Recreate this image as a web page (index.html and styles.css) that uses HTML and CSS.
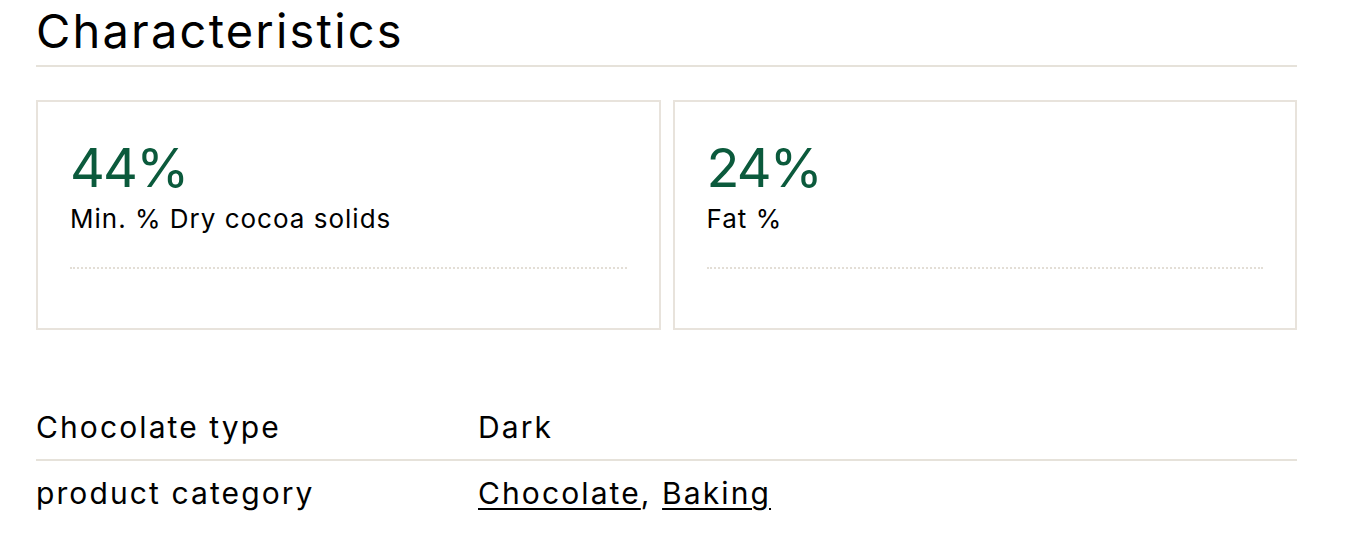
FILE: index.html
```html
<!DOCTYPE html>
<html lang="en">
<head>
<meta charset="utf-8">
<title>Characteristics</title>
<link rel="stylesheet" href="styles.css">
</head>
<body>
<section class="chars">
  <h2 class="chars-title">Characteristics</h2>
  <div class="cards">
    <div class="card">
      <div class="card-value">44%</div>
      <div class="card-label">Min. % Dry cocoa solids</div>
      <div class="card-rule"></div>
    </div>
    <div class="card">
      <div class="card-value">24%</div>
      <div class="card-label">Fat %</div>
      <div class="card-rule"></div>
    </div>
  </div>
  <div class="specs">
    <div class="spec-row">
      <div class="spec-key">Chocolate type</div>
      <div class="spec-val">Dark</div>
    </div>
    <div class="spec-row">
      <div class="spec-key">product category</div>
      <div class="spec-val"><a href="#">Chocolate</a>, <a href="#">Baking</a></div>
    </div>
  </div>
</section>
</body>
</html>
```
FILE: styles.css
```css
html, body {
  margin: 0;
  padding: 0;
  background: #ffffff;
}
body {
  font-family: "Inter", "DejaVu Sans", sans-serif;
  color: #000;
}
.chars {
  width: 1261px;
  margin-left: 36px;
}
.chars-title {
  margin: 0;
  font-weight: 400;
  font-size: 47px;
  line-height: 61px;
  letter-spacing: 2.2px;
  padding-bottom: 4px;
  border-bottom: 2px solid #e6e2da;
}
.cards {
  display: grid;
  grid-template-columns: 1fr 1fr;
  gap: 12px;
  margin-top: 33px;
}
.card {
  border: 2px solid #e8e3dc;
  height: 230px;
  box-sizing: border-box;
  padding: 32px 32px 0 32px;
}
.card-value {
  color: #0b5a3c;
  font-size: 54px;
  line-height: 67px;
  letter-spacing: -1.8px;
}
.card-label {
  font-size: 26px;
  line-height: 31px;
  padding-top: 2px;
  letter-spacing: 1px;
}
.card-rule {
  margin-top: 33px;
  border-top: 2px dotted #e3ded6;
}
.specs {
  margin-top: 65px;
}
.spec-row {
  display: flex;
  font-size: 30px;
  line-height: 64px;
  letter-spacing: 2.1px;
}
.spec-row + .spec-row {
  border-top: 2px solid #e6e2da;
}
.spec-key {
  width: 442px;
}
.spec-val a {
  color: #000;
  text-decoration: underline;
  text-decoration-thickness: 2px;
  text-underline-offset: 4px;
}
```
